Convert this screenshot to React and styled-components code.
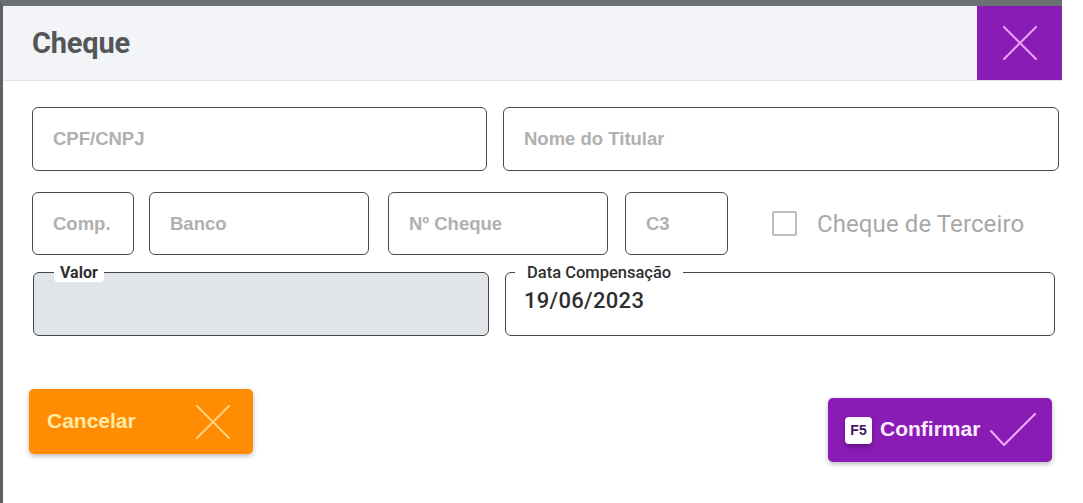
import React from "react";
import styled, { createGlobalStyle } from "styled-components";

const Global = createGlobalStyle`
  html, body { margin: 0; padding: 0; background: #ffffff; }
  body { font-family: Roboto, "Liberation Sans", Arial, sans-serif; }
  * { box-sizing: border-box; }
`;

const Frame = styled.div`
  width: 1062px;
  height: 503px;
  border-top: 6px solid #6c7073;
  border-left: 3px solid #5d6164;
  background: #ffffff;
  display: flex;
  flex-direction: column;
`;

const Header = styled.header`
  height: 75px;
  background: #f3f4f8;
  border-bottom: 1px solid #e3e4e8;
  display: flex;
  align-items: stretch;
  justify-content: space-between;
  padding-left: 29px;
`;

const Title = styled.h1`
  margin: 0;
  align-self: center;
  font-family: Roboto, sans-serif;
  font-weight: 700;
  font-size: 29px;
  color: #555658;
  letter-spacing: -0.2px;
`;

const CloseButton = styled.button`
  width: 85px;
  height: 74px;
  border: none;
  padding: 0;
  background: #8a1cb6;
  display: flex;
  align-items: center;
  justify-content: center;
  cursor: pointer;
`;

const Body = styled.div`
  padding: 26px 0 0 29px;
  display: flex;
  flex-direction: column;
`;

const Row = styled.div`
  display: flex;
  align-items: center;
  gap: ${(p) => p.$gap ?? 16}px;
  margin-top: ${(p) => p.$top ?? 0}px;
  padding-left: ${(p) => p.$indent ?? 0}px;
`;

const Input = styled.input`
  width: ${(p) => p.$w}px;
  height: ${(p) => p.$h ?? 64}px;
  margin: 0 ${(p) => p.$mr ?? 0}px 0 0;
  border: 1px solid #4a4a4a;
  border-radius: 6px;
  padding: 0 0 0 20px;
  background: #fff;
  font-family: "Liberation Sans", Arial, sans-serif;
  font-weight: 700;
  font-size: 18.5px;
  color: #333;
  outline: none;
  &::placeholder {
    color: #b0b0b0;
  }
`;

const CheckWrap = styled.label`
  display: flex;
  align-items: center;
  gap: 20px;
  margin-left: ${(p) => p.$ml ?? 0}px;
  white-space: nowrap;
  cursor: pointer;
`;

const CheckBox = styled.span`
  flex: none;
  width: 25px;
  height: 25px;
  border: 2px solid #bdbdbd;
  border-radius: 2px;
  background: #fff;
`;

const CheckLabel = styled.span`
  font-family: Roboto, sans-serif;
  font-size: 24px;
  font-weight: 400;
  color: #a8a8a8;
  letter-spacing: 0.1px;
`;

const Field = styled.div`
  position: relative;
  width: ${(p) => p.$w}px;
  height: 64px;
  border: 1px solid #444;
  border-radius: 6px;
  background: ${(p) => (p.$disabled ? "#e1e5e9" : "#fff")};
  display: flex;
  align-items: flex-start;
  padding: 15px 0 0 18px;
`;

const FieldLabel = styled.span`
  position: absolute;
  top: -10px;
  left: ${(p) => p.$left}px;
  padding: 0 ${(p) => p.$pad}px;
  background: #fff;
  border-radius: 4px;
  font-family: Roboto, sans-serif;
  font-weight: ${(p) => p.$weight};
  font-size: ${(p) => p.$size}px;
  line-height: 19px;
  color: #2f2f2f;
`;

const FieldValue = styled.span`
  font-family: Roboto, sans-serif;
  font-weight: 500;
  font-size: 22px;
  line-height: 26px;
  color: #2e2e2e;
  letter-spacing: 0.3px;
`;

const Footer = styled.div`
  display: flex;
  align-items: flex-start;
  justify-content: space-between;
  margin-top: 53px;
  padding-left: 26px;
  padding-right: 10px;
`;

const ActionButton = styled.button`
  width: 224px;
  height: ${(p) => p.$h}px;
  margin-top: ${(p) => p.$mt ?? 0}px;
  border: none;
  border-radius: 5px;
  background: ${(p) => p.$bg};
  color: ${(p) => p.$fg};
  box-shadow: 0 2px 5px rgba(0, 0, 0, 0.28);
  display: flex;
  align-items: center;
  padding: 0 ${(p) => p.$pr}px 0 ${(p) => p.$pl}px;
  gap: 8px;
  font-family: "Liberation Sans", Arial, sans-serif;
  font-weight: 700;
  font-size: 21px;
  cursor: pointer;
`;

const ButtonText = styled.span`
  flex: 1;
  text-align: left;
  margin-top: -2px;
`;

const KeyBadge = styled.span`
  flex: none;
  width: 27px;
  height: 27px;
  border-radius: 4px;
  background: #ffffff;
  color: #4a1460;
  font-family: "Liberation Sans", Arial, sans-serif;
  font-weight: 700;
  font-size: 14px;
  display: flex;
  align-items: center;
  justify-content: center;
  box-shadow: 0 3px 5px rgba(60, 0, 80, 0.45);
`;

const XIcon = ({ size, color, width = 2 }) => (
  <svg width={size} height={size} viewBox="0 0 34 34" fill="none">
    <path d="M1 1 L33 33 M33 1 L1 33" stroke={color} strokeWidth={width} strokeLinecap="round" />
  </svg>
);

const CheckIcon = ({ color }) => (
  <svg width="46" height="34" viewBox="0 0 46 34" fill="none">
    <path d="M1 18 L14 32 L45 1" stroke={color} strokeWidth="2" strokeLinecap="round" strokeLinejoin="round" />
  </svg>
);

export default function App() {
  return (
    <>
      <Global />
      <Frame>
        <Header>
          <Title>Cheque</Title>
          <CloseButton aria-label="Fechar">
            <XIcon size={34} color="#e9a2f2" width={2} />
          </CloseButton>
        </Header>
        <Body>
          <Row $gap={16}>
            <Input $w={455} placeholder="CPF/CNPJ" />
            <Input $w={556} placeholder="Nome do Titular" />
          </Row>
          <Row $top={21} $gap={0}>
            <Input $w={102} $h={63} $mr={15} placeholder="Comp." />
            <Input $w={220} $h={63} $mr={19} placeholder="Banco" />
            <Input $w={220} $h={63} $mr={17} placeholder="Nº Cheque" />
            <Input $w={103} $h={63} placeholder="C3" />
            <CheckWrap $ml={44}>
              <CheckBox />
              <CheckLabel>Cheque de Terceiro</CheckLabel>
            </CheckWrap>
          </Row>
          <Row $top={17} $gap={16} $indent={1}>
            <Field $w={456} $disabled>
              <FieldLabel $left={20} $pad={6} $weight={700} $size={16}>Valor</FieldLabel>
            </Field>
            <Field $w={550}>
              <FieldLabel $left={9} $pad={12} $weight={500} $size={16.5}>Data Compensação</FieldLabel>
              <FieldValue>19/06/2023</FieldValue>
            </Field>
          </Row>
        </Body>
        <Footer>
          <ActionButton $h={65} $bg="#ff8c02" $fg="#ffeaa6" $pl={18} $pr={23}>
            <ButtonText>Cancelar</ButtonText>
            <XIcon size={34} color="#ffd27c" width={2} />
          </ActionButton>
          <ActionButton $h={64} $mt={9} $bg="#8a1cb6" $fg="#fdebff" $pl={17} $pr={16}>
            <KeyBadge>F5</KeyBadge>
            <ButtonText>Confirmar</ButtonText>
            <CheckIcon color="#f2aaf6" />
          </ActionButton>
        </Footer>
      </Frame>
    </>
  );
}
